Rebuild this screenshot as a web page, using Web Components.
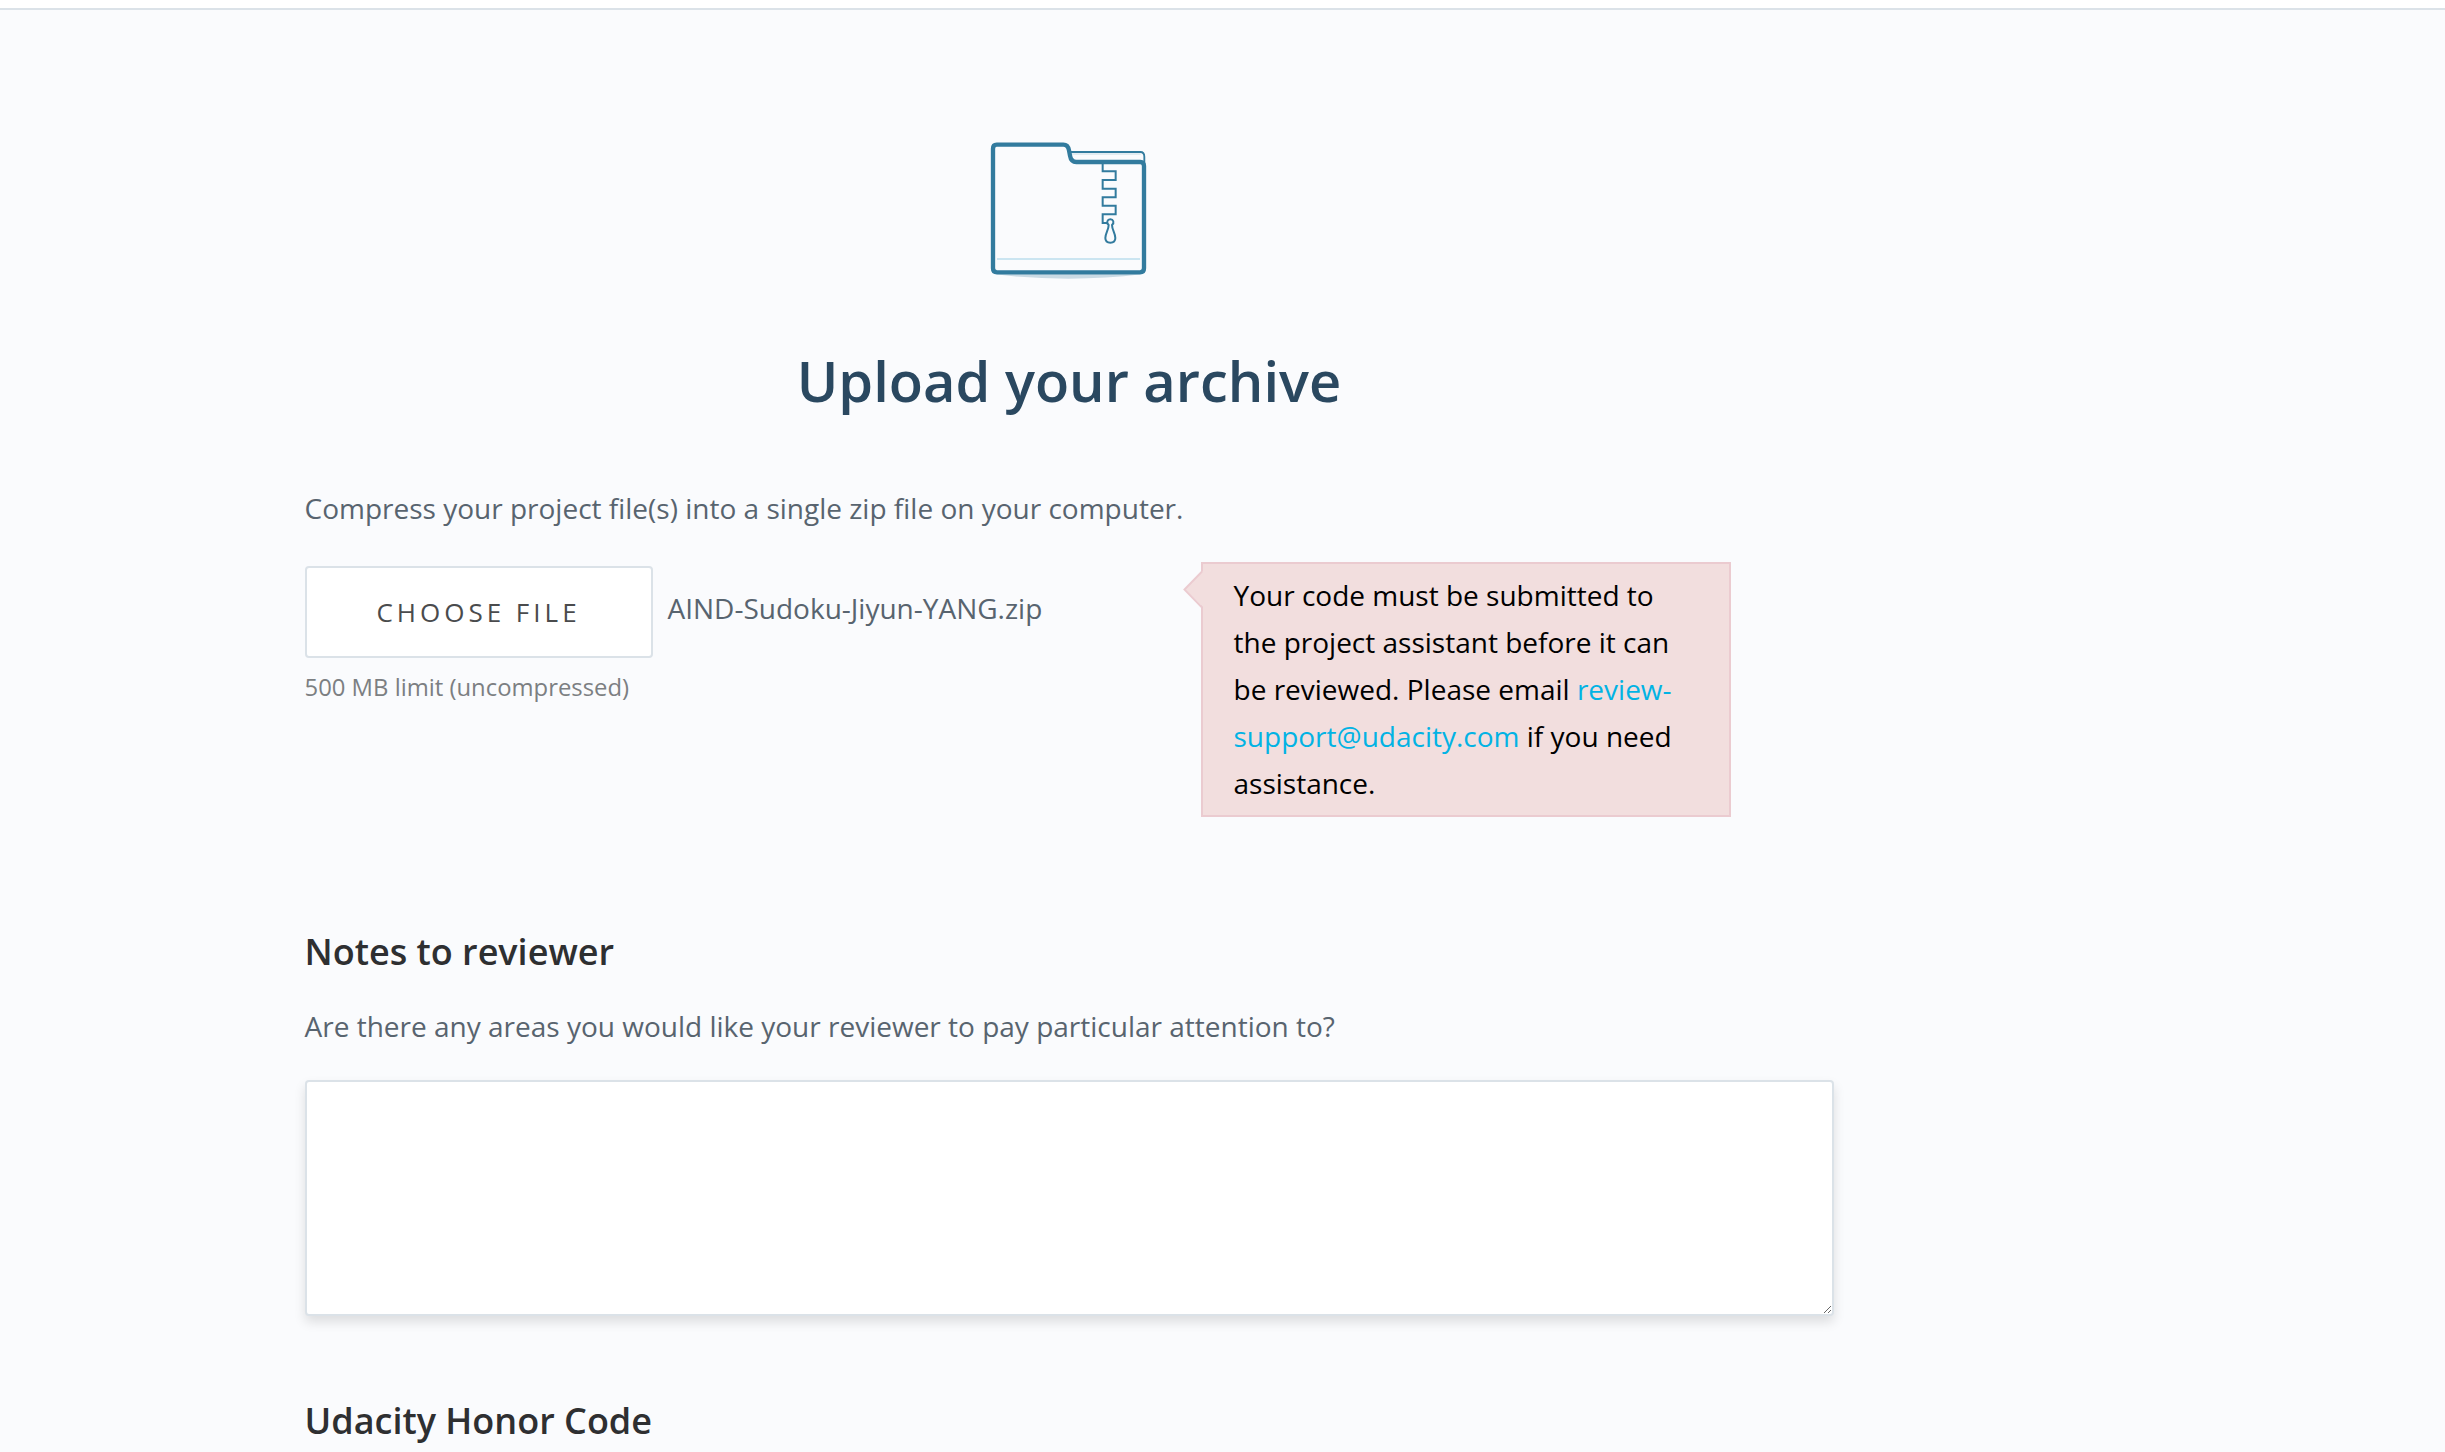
<!DOCTYPE html>
<html lang="en">
<head>
<meta charset="utf-8">
<title>Upload your archive</title>
<style>
html,body{margin:0;padding:0}
body{height:1452px;overflow:hidden;background:#fafbfd;font-family:"Open Sans","Noto Sans",sans-serif;font-size:28px;line-height:48px;color:#58646f}
</style>
</head>
<body>
<submission-page></submission-page>
<script>
const define=(name,html)=>customElements.define(name,class extends HTMLElement{
  constructor(){super();this.attachShadow({mode:"open"}).innerHTML=html;}
});

define("archive-icon",`
<style>:host{display:block;width:160px;height:140px}svg{display:block}</style>
<svg width="160" height="140" viewBox="57 48 480 420" fill="none" stroke="#327b9e" stroke-linejoin="round">
<path d="M76 448 Q180 461 295 461 T514 448Z" fill="#c9dae4" stroke="none"/>
<path d="M300 81H511Q523 81 523 95V112" stroke-width="5.5"/>
<path d="M300 87H512" stroke="#b5cfdd" stroke-width="2"/>
<path d="M80 59H280C291 59 295 65 297 76L300 92C302 105 307 111 319 111H511Q522 111 522 123V430Q522 442 510 442H81Q69 442 69 430V71Q69 59 80 59Z" stroke-width="13"/>
<path d="M81 402H510" stroke="#cbe5f1" stroke-width="6"/>
<path d="M398 117V139H437V165H398V191H437V217H398V242H437V268H398V294H413" stroke-width="6" stroke-linejoin="miter"/>
<path d="M416 300C408 293 412 283 421 283S434 293 426 300C426 314 436 324 436 339C436 348 430 353 421 353S406 348 406 339C406 324 416 314 416 300Z" stroke-width="6"/>
</svg>`);

define("page-title",`
<style>:host{display:block;text-align:center}h1{margin:0;font-size:56px;line-height:60px;font-weight:600;color:#2a4860}</style>
<h1><slot></slot></h1>`);

define("section-heading",`
<style>:host{display:block}h2{margin:0 0 0 -.5px;font-size:36px;line-height:48px;font-weight:600;color:#2e2f31}</style>
<h2><slot></slot></h2>`);

define("file-picker",`
<style>
:host{display:flex;flex-direction:column;padding-top:4px}
.row{display:flex;gap:14.5px}
button{box-sizing:border-box;width:348px;height:92px;margin:0;padding:0 1px 0 0;border:2px solid #dbe2e8;border-radius:4px;background:#fff;font-family:inherit;font-size:26px;letter-spacing:4px;color:#4a4b4d}
.name{padding-top:18px}
small{font-size:23.85px;line-height:36px;margin:11px 0 0 -.5px;color:#7c7f82}
</style>
<div class="row"><button>CHOOSE FILE</button><span class="name"><slot></slot></span></div>
<small>500 MB limit (uncompressed)</small>`);

define("error-callout",`
<style>
:host{display:block;position:relative;box-sizing:border-box;width:530px;height:255px;border:2px solid #ebcbd0;background:#f2dede;padding:8px 31.5px 8px 30.5px;line-height:47px;color:#000}
svg{position:absolute;left:-20px;top:7px}
</style>
<svg width="20" height="37" viewBox="0 0 20 37"><path d="M20 0 L2 18 L20 36Z" fill="#f2dede"/><path d="M19 .5 L1.5 18.5 L19 36.5" fill="none" stroke="#ebcbd0" stroke-width="2"/></svg>
<slot></slot>`);

define("notes-field",`
<style>
:host{display:block}
textarea{display:block;box-sizing:border-box;width:100%;height:236px;margin:0;border:2px solid #dbe2e8;border-radius:4px;background:#fff;box-shadow:0 6px 12px rgba(0,0,0,.12);outline:0;font:inherit}
</style>
<textarea></textarea>`);

define("submission-page",`
<style>
:host{display:block}
header{height:8px;background:#fff;border-bottom:2px solid #dbe2e8}
main{display:flex;flex-direction:column;width:1529px;margin-left:305px;padding-top:131px}
archive-icon{align-self:center;margin-right:1px}
page-title{margin-top:69px;margin-right:1px}
p{margin:0 0 0 -.5px}
.lead{margin-top:74px}
.upload{display:flex;justify-content:space-between;margin-top:30px;padding-right:103px}
.notes{margin-top:111px}
.question{margin-top:26px}
notes-field{margin-top:30px}
.honor{margin-top:81px}
a{color:#02b3e4;text-decoration:none}
</style>
<header></header>
<main>
<archive-icon></archive-icon>
<page-title>Upload your archive</page-title>
<p class="lead">Compress your project file(s) into a single zip file on your computer.</p>
<div class="upload">
<file-picker>AIND-Sudoku-Jiyun-YANG.zip</file-picker>
<error-callout>Your code must be submitted to the project assistant before it can be reviewed. Please email <a>review-support@udacity.com</a> if you need assistance.</error-callout>
</div>
<section-heading class="notes">Notes to reviewer</section-heading>
<p class="question">Are there any areas you would like your reviewer to pay particular attention to?</p>
<notes-field></notes-field>
<section-heading class="honor">Udacity Honor Code</section-heading>
</main>`);
</script>
</body>
</html>
